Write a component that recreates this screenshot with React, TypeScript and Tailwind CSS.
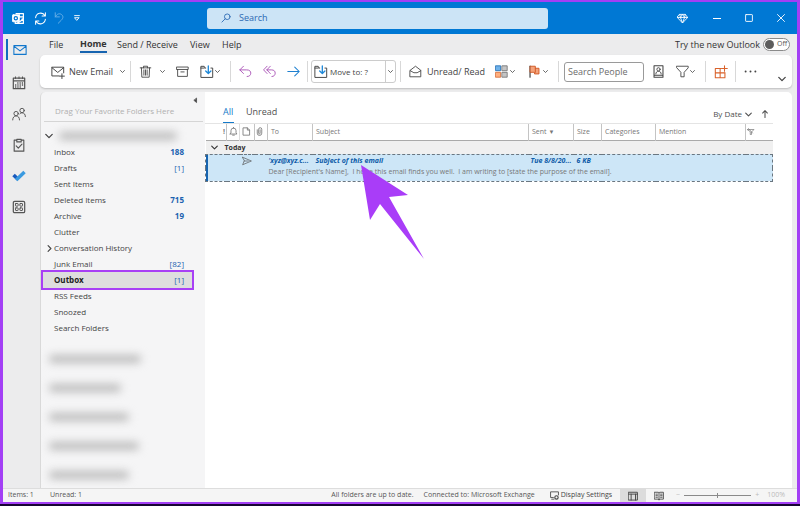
import type { ReactNode } from "react";

type IconProps = { className?: string; box?: string; children: ReactNode };

function Icon({ className = "", box = "0 0 16 16", children }: IconProps) {
  return (
    <svg
      viewBox={box}
      className={`shrink-0 ${className}`}
      fill="none"
      stroke="currentColor"
      strokeWidth="1.1"
      strokeLinejoin="round"
      strokeLinecap="round"
      aria-hidden="true"
    >
      {children}
    </svg>
  );
}

const Chevron = ({ className = "size-[5px]" }: { className?: string }) => (
  <Icon className={className} box="0 0 10 10">
    <path d="M1 3l4 4 4-4" strokeWidth="1.6" />
  </Icon>
);

const FolderDown = () => (
  <Icon className="size-[14px]">
    <path d="M6.500 3.500H5.800L4.800 1.500H1v12.700h13.500V3.500h-2M1 3.500h4" />
    <path d="M9.500 1v8.500M6.500 6.800l3 3 3-3" stroke="#1e88d8" strokeWidth="1.500" />
  </Icon>
);

const Separator = ({ className = "" }: { className?: string }) => (
  <span className={`h-[21px] w-px shrink-0 bg-[#d8d8d8] ${className}`} />
);

const rail = [
  {
    name: "Calendar",
    icon: (
      <Icon className="size-[14px]">
        <path d="M1.500 2.500h13v12h-13zM1.500 5.500h13" strokeWidth="1.400" />
        <path d="M4 1v2M8 1v2M12 1v2" />
        <path d="M6 8h7M3.500 10.300h9.500M3.500 12.500h7" strokeDasharray="1.4 1.2" strokeWidth="1.600" strokeLinecap="butt" />
      </Icon>
    ),
  },
  {
    name: "People",
    icon: (
      <Icon className="size-[14px]">
        <circle cx="4.700" cy="7.500" r="2.500" />
        <path d="M.8 14.800c0-3 1.700-4.600 3.900-4.600s3.900 1.600 3.900 4.600" />
        <circle cx="11.500" cy="4" r="2.500" />
        <path d="M8.800 8c.6-.8 1.500-1.300 2.700-1.300 2.200 0 3.800 1.500 3.800 4.300" />
      </Icon>
    ),
  },
  {
    name: "Tasks",
    icon: (
      <Icon className="size-[14px]">
        <path d="M5.500 2.500h-3v12.500h11v-12.500h-3M5.500 1.500h5v3h-5z" strokeWidth="1.300" />
        <path d="M4.800 9l2.400 2.500 4.200-4.500" strokeWidth="1.300" />
      </Icon>
    ),
  },
  {
    name: "To Do",
    icon: (
      <Icon className="size-[14px]">
        <path d="M1.800 6.800l5 5" stroke="#185abd" strokeWidth="4" strokeLinecap="butt" />
        <path d="M4.800 12.500l9.500-9" stroke="#3a9ae0" strokeWidth="4" strokeLinecap="butt" />
      </Icon>
    ),
  },
  {
    name: "More apps",
    icon: (
      <Icon className="size-[14px]">
        <rect x="1.500" y="1.500" width="13" height="13" rx="1.500" strokeWidth="1.400" />
        <rect x="4" y="4" width="3" height="3" rx=".5" />
        <rect x="9" y="4" width="3" height="3" rx=".5" />
        <rect x="4" y="9" width="3" height="3" rx=".5" />
        <rect x="9" y="9" width="3" height="3" rx=".5" />
      </Icon>
    ),
  },
];

const folders = [
  { name: "Inbox", count: "188", strong: true },
  { name: "Drafts", count: "[1]" },
  { name: "Sent Items" },
  { name: "Deleted Items", count: "715", strong: true },
  { name: "Archive", count: "19", strong: true },
  { name: "Clutter" },
  { name: "Conversation History", expandable: true },
  { name: "Junk Email", count: "[82]" },
  { name: "Outbox", count: "[1]", selected: true },
  { name: "RSS Feeds" },
  { name: "Snoozed" },
  { name: "Search Folders" },
];

function TitleBar() {
  return (
    <header className="flex h-8 shrink-0 items-center bg-[#0078d4] pr-3 pl-[9px] text-white">
      <Icon className="size-[13px]">
        <path d="M5 2h9v6l-2 1M14 8v6H4v-2M6 14l8-5" strokeWidth="1.500" />
        <path d="M9 2v4h5M9 6h5" />
        <rect x="0.500" y="3.500" width="8.500" height="8.500" rx="1" fill="white" />
        <circle cx="4.700" cy="7.700" r="2" stroke="#0078d4" strokeWidth="1.500" />
      </Icon>
      <button aria-label="Sync" className="ml-[9px]">
        <Icon className="size-[13px]">
          <path d="M2 7a6.200 6.200 0 0111.500-2.500M14 9a6.200 6.200 0 01-11.500 2.500M14 1v4h-4M2 15v-4h4" strokeWidth="1.300" />
        </Icon>
      </button>
      <button aria-label="Undo" className="ml-1.5 text-[#65aee6]">
        <Icon className="size-[12px]">
          <path d="M3 1v5.500h5.500M3 6.500C5.500 2 9 1.500 11.500 3.500c3 2.500 1.500 5.500-.5 7.500L7 15" strokeWidth="1.300" />
        </Icon>
      </button>
      <button aria-label="Customize toolbar" className="ml-[9px]">
        <Icon className="size-[6px]" box="0 0 10 10">
          <path d="M1 1h8" strokeWidth="1.500" />
          <path d="M1.500 4.500h7L5 8.500z" strokeWidth="1.500" />
        </Icon>
      </button>
      <label className="ml-[127px] flex h-[21px] w-[341px] items-center gap-2 rounded-[3px] bg-[#cce4f6] px-3.5 text-[#2b69b3]">
        <Icon className="size-[10px]">
          <circle cx="10" cy="6" r="4.500" strokeWidth="1.400" />
          <path d="M6.700 9.300L1.500 14.500" strokeWidth="1.400" />
        </Icon>
        <input aria-label="Search" placeholder="Search" className="w-full bg-transparent text-[9px] outline-none placeholder:text-[#2b69b3]" />
      </label>
      <div className="ml-auto flex items-center">
        <button aria-label="Premium" className="mr-[25px]">
          <Icon className="size-[11px]">
            <path d="M4 2h8l3.500 4.500L8 14.500.5 6.500zM.5 6.500h15M4 2l1 4.500 3 8 3-8L12 2M5 6.500L8 2l3 4.500" strokeWidth="1.300" />
          </Icon>
        </button>
        <button aria-label="Minimize" className="mr-6">
          <Icon className="size-[8px]" box="0 0 8 8"><path d="M0 4.500h8" strokeWidth="1" strokeLinecap="butt" /></Icon>
        </button>
        <button aria-label="Maximize" className="mr-6">
          <Icon className="size-[8px]" box="0 0 8 8"><rect x=".6" y=".6" width="6.800" height="6.800" rx=".5" strokeWidth=".9" /></Icon>
        </button>
        <button aria-label="Close">
          <Icon className="size-[8px]" box="0 0 8 8"><path d="M.5.5l7 7M7.500.5l-7 7" strokeWidth=".9" /></Icon>
        </button>
      </div>
    </header>
  );
}

function MenuBar() {
  return (
    <nav className="flex h-[21px] shrink-0 items-center pr-0.5 pl-[9px] text-[9px]">
      <button className="w-[31px] text-left">File</button>
      <button className="flex w-[37px] flex-col items-start font-bold">
        <span className="border-b-2 border-[#1764b0] leading-[14px]">Home</span>
      </button>
      <button className="w-[73px] text-left">Send / Receive</button>
      <button className="w-8 text-left">View</button>
      <button>Help</button>
      <label className="ml-auto flex items-center gap-[3px]">
        Try the new Outlook
        <span className="flex h-[13px] w-[27px] items-center gap-[3px] rounded-full border border-[#8a8a8a] bg-white pl-px text-[7px] text-[#555]">
          <input type="checkbox" role="switch" className="size-[9px] appearance-none rounded-full bg-[#5c5c5c]" />
          Off
        </span>
      </label>
    </nav>
  );
}

function Ribbon() {
  return (
    <div role="toolbar" className="flex h-[33px] shrink-0 items-center rounded-[5px] bg-white pr-1.5 pl-[11px] text-[9px] text-[#444] shadow-[0_1px_2px_#0003]">
      <button className="flex w-[74px] items-center whitespace-nowrap">
        <Icon className="size-[14px]">
          <path d="M9 12.500H1v-10h13.500V9M1 3l6.700 5.500L14.500 3M12.500 10v5.500M9.700 12.700h5.600" />
        </Icon>
        <span className="ml-1 flex-1 text-left">New Email</span>
        <Chevron />
      </button>
      <Separator className="ml-[5px]" />
      <button aria-label="Delete" className="ml-2">
        <Icon className="size-[13px]">
          <path d="M1.500 3.500h13M5.500 3.500v-2h5v2M3 3.500l.5 11.500h9l.5-11.500M6 6v6.500M8 6v6.500M10 6v6.500" />
        </Icon>
      </button>
      <button aria-label="Delete options" className="ml-2"><Chevron /></button>
      <button aria-label="Archive" className="ml-[11px]">
        <Icon className="size-[13px]">
          <path d="M1 2.500h14v3H1zM2 5.500v8.500h12V5.500M6 8.500h4" />
        </Icon>
      </button>
      <button aria-label="Move" className="ml-[11px] flex items-center gap-px"><FolderDown /><Chevron /></button>
      <Separator className="ml-2.5" />
      <button aria-label="Reply" className="ml-2 text-[#a74fb5]">
        <Icon className="size-[13px]">
          <path d="M5.500 1.500L1 6l4.500 4.500M1 6h8.500c3.500 0 5 1.700 5 4s-1.500 4.200-4.500 4.200" />
        </Icon>
      </button>
      <button aria-label="Reply all" className="ml-[11px] text-[#a74fb5]">
        <Icon className="size-[13px]">
          <path d="M5 1.500L.7 6 5 10.500M9 1.500L4.700 6 9 10.500M4.700 6H10.500c3 0 4.500 1.700 4.500 4s-1.500 4.200-4 4.200" />
        </Icon>
      </button>
      <button aria-label="Forward" className="ml-[11px] text-[#1e80d0]">
        <Icon className="size-[13px]">
          <path d="M1 8h14M9.500 2.500L15 8l-5.500 5.500" strokeWidth="1.300" />
        </Icon>
      </button>
      <Separator className="ml-[7px]" />
      <div className="ml-[3px] flex h-[23px] w-[85px] items-stretch rounded-[3px] border border-[#ccc] text-[8px]">
        <button className="flex flex-1 items-center gap-0.5 pl-0.5"><FolderDown />Move to: ?</button>
        <button aria-label="Move options" className="flex w-2.5 items-center justify-center border-l border-[#ccc]"><Chevron /></button>
      </div>
      <Separator className="ml-1" />
      <button className="ml-2 flex w-[78px] items-center gap-[5px] whitespace-nowrap">
        <Icon className="size-[13px]">
          <path d="M1.500 6.500L8 1.500l6.500 5v8h-13zM1.500 7L6 9.500h4L14.500 7" />
        </Icon>
        Unread/ Read
      </button>
      <button aria-label="Categorize" className="ml-2 flex items-center gap-0.5">
        <Icon className="size-[13px]">
          <rect x="1" y="1" width="6" height="6" fill="#6fb2ea" stroke="#2472b8" />
          <rect x="9" y="1" width="6" height="6" fill="#c4c4c4" stroke="#777" />
          <rect x="1" y="9" width="6" height="6" fill="#ffb080" stroke="#d96f3a" />
          <rect x="9" y="9" width="6" height="6" fill="#c4c4c4" stroke="#777" />
        </Icon>
        <Chevron />
      </button>
      <button aria-label="Follow up" className="ml-[13px] flex items-center gap-0.5">
        <Icon className="size-[13px]">
          <path d="M2.500 1.500v13.500" strokeWidth="1.500" />
          <path d="M3 1.500h6v2.500h4.500v7H8v-2H3z" fill="#f5a27a" stroke="#cf5420" />
          <path d="M9 4v5" stroke="#cf5420" />
        </Icon>
        <Chevron />
      </button>
      <Separator className="ml-2.5" />
      <input aria-label="Search People" placeholder="Search People" className="ml-[5px] h-5 w-20 rounded-[3px] border border-[#9a9a9a] px-[3px] text-[9px] outline-none placeholder:text-[#6b6b6b]" />
      <button aria-label="Address book" className="ml-2">
        <Icon className="size-[13px]">
          <path d="M2.500 1h11v14h-11zM2.500 12.500h11" strokeWidth="1.300" />
          <circle cx="8" cy="5.300" r="2" />
          <path d="M4.700 11c0-2 1.300-3.200 3.300-3.200s3.300 1.200 3.300 3.200" />
        </Icon>
      </button>
      <button aria-label="Filter email" className="ml-[11px] flex items-center gap-px">
        <Icon className="size-[13px]">
          <path d="M1 1.500h14v2L10 9v5.500H6V9L1 3.500z" />
        </Icon>
        <Chevron />
      </button>
      <Separator className="ml-2.5" />
      <button aria-label="Get add-ins" className="ml-2 text-[#d9622b]">
        <Icon className="size-[14px]">
          <path d="M8 4H1.500v10.500H12.500V8.500M1.500 9h11M7 4v10.500M12 .8v6.400M8.800 4h6.400" strokeWidth="1.200" />
        </Icon>
      </button>
      <Separator className="ml-[7px]" />
      <button aria-label="More commands" className="ml-2">
        <Icon className="size-[13px]">
          <path d="M2 8h.01M8 8h.01M14 8h.01" strokeWidth="2.400" />
        </Icon>
      </button>
      <button aria-label="Collapse ribbon" className="mt-3.5 ml-auto"><Chevron className="size-[8px]" /></button>
    </div>
  );
}

const Redacted = ({ className }: { className: string }) => (
  <span className={`block rounded-full bg-[#bcbcbc] blur-[4px] ${className}`} />
);

function FolderPane() {
  return (
    <aside className="flex w-[165px] shrink-0 flex-col overflow-hidden rounded-tl-[5px] border-l border-[#d9d9d9] bg-[#f5f5f6] text-[8px] text-[#444]">
      <div className="mr-0.5 ml-[3px] flex h-[30px] shrink-0 flex-col border-b border-[#d5d5d5]">
        <button aria-label="Collapse folder pane" className="mt-[5px] mr-1 self-end">
          <Icon className="size-[7px]" box="0 0 10 10"><path d="M6.500 2v6L3 5z" fill="currentColor" strokeWidth="1" /></Icon>
        </button>
        <p className="pl-[11px] leading-[14px] text-[#b0b0b0]">Drag Your Favorite Folders Here</p>
      </div>
      <div className="flex h-[22px] shrink-0 items-center pt-1.5 pl-1">
        <Chevron className="size-[8px]" />
        <Redacted className="ml-1.5 h-2 w-[118px]" />
      </div>
      <ul className="shrink-0">
        {folders.map((f) => (
          <li key={f.name}>
            <button
              className={`relative flex w-[153px] items-center justify-between pr-2.5 pl-[13px] text-left ${
                f.selected ? "-my-0.5 h-5 bg-[#dedede] font-bold text-[#1c1c1c] outline-2 -outline-offset-2 outline-[#a840f5]" : "h-4"
              }`}
            >
              {f.expandable && (
                <Icon className="absolute left-[5px] size-[7px]" box="0 0 10 10"><path d="M3 1l4 4-4 4" strokeWidth="1.600" /></Icon>
              )}
              {f.name}
              {f.count && <span className={`text-[#1b62b0] ${f.strong ? "font-bold" : "font-normal"}`}>{f.count}</span>}
            </button>
          </li>
        ))}
      </ul>
      <div className="mt-[19px] flex flex-col gap-[21px] pl-2">
        <Redacted className="h-2 w-[92px]" />
        <Redacted className="h-2 w-[72px]" />
        <Redacted className="h-2 w-20" />
        <Redacted className="h-2 w-[90px]" />
        <Redacted className="h-2 w-20" />
      </div>
    </aside>
  );
}

const headCell = "border-l border-[#c4c4c4] pl-[3px] text-left font-normal";

function MessageList() {
  return (
    <main className="min-w-0 flex-1 rounded-tr-[5px] bg-white pr-[19px]">
      <div className="flex h-8 items-end border-b border-[#e4e4e4] pl-[18px] text-[9px] text-[#505050]">
        <button className="w-[23px] text-left text-[#1479c9]">
          <span className="block w-[11px] border-b border-[#1479c9] leading-[20px]">All</span>
        </button>
        <button className="pb-px leading-[20px]">Unread</button>
        <button className="mr-[9px] ml-auto flex items-center gap-[3px] text-[8px] leading-[18px]">
          By Date <Chevron className="size-[7px]" />
        </button>
        <button aria-label="Reverse sort order" className="mr-1 pb-[5px]">
          <Icon className="size-[8px]" box="0 0 10 10"><path d="M5 9.500V.8M2 3.800l3-3 3 3" strokeWidth="1.300" /></Icon>
        </button>
      </div>
      <table className="w-full table-fixed border-collapse text-[7px] whitespace-nowrap text-[#777]">
        <colgroup>
          <col className="w-[21px]" />
          <col className="w-[13px]" />
          <col className="w-[15px]" />
          <col className="w-[13px]" />
          <col className="w-[45px]" />
          <col />
          <col className="w-[45px]" />
          <col className="w-[28px]" />
          <col className="w-[54px]" />
          <col className="w-[90px]" />
          <col className="w-[27px]" />
        </colgroup>
        <thead>
          <tr className="h-4">
            <th aria-label="Importance" className="pr-px text-right font-bold">!</th>
            <th aria-label="Reminder" className="border-l border-[#c4c4c4] pl-0.5">
              <Icon className="size-[9px]"><path d="M2 12.500h12L12.500 10V6.500a4.500 4.500 0 00-9 0V10zM6.500 14.500h3M8 2V.5" strokeWidth="1.500" /></Icon>
            </th>
            <th aria-label="Icon" className="border-l border-[#ddd] pl-0.5">
              <Icon className="size-[9px]"><path d="M2.500 1.500h7l4 4v9h-11zM9.500 1.500v4h4" strokeWidth="1.500" /></Icon>
            </th>
            <th aria-label="Attachment" className="border-l border-[#c4c4c4]">
              <Icon className="size-[9px]"><path d="M4 5v6a4 4 0 008 0V4a2.700 2.700 0 00-5.500 0v7a1.300 1.300 0 002.600 0V5" strokeWidth="1.500" /></Icon>
            </th>
            <th className={headCell}>To</th>
            <th className={headCell}>Subject</th>
            <th className={headCell}>Sent <span className="text-[6px]">▼</span></th>
            <th className={headCell}>Size</th>
            <th className={headCell}>Categories</th>
            <th className={headCell}>Mention</th>
            <th aria-label="Filter" className="border-l border-[#c4c4c4] pl-px">
              <Icon className="size-[8px]"><path d="M1 3h13L9 8v5H6.500V8zM3 1l8 9" strokeWidth="1.400" /></Icon>
            </th>
          </tr>
        </thead>
        <tbody>
          <tr className="h-[14px] border-t border-[#aaa] bg-[#f0f0f0] text-[#333]">
            <th colSpan={11} className="text-left">
              <span className="flex items-center gap-[7px] pl-[5px] leading-[13px]">
                <Chevron className="size-[7px]" />
                Today
              </span>
            </th>
          </tr>
        </tbody>
        <tbody className="border border-dashed border-[#6a7680] bg-[#cde6f7]">
          <tr className="h-[14px] font-bold text-[#0e5ba8] italic">
            <td colSpan={2} rowSpan={2} className="shadow-[inset_2px_0_#1764b0]" />
            <td colSpan={2} className="text-[#555]">
              <Icon className="ml-0.5 size-[10px]"><path d="M1 2l14 6-14 6 2.500-6zM3.500 8H10" /></Icon>
            </td>
            <td className="pl-px">'xyz@xyz.c...</td>
            <td className="pl-[3px]">Subject of this email</td>
            <td className="pl-0.5">Tue 8/8/20...</td>
            <td className="pl-[3px]">6 KB</td>
            <td colSpan={3} />
          </tr>
          <tr className="h-[13px] align-top">
            <td colSpan={2} />
            <td colSpan={7} className="pl-px leading-[8px] whitespace-pre">
              {"Dear [Recipient's Name],  I hope this email finds you well.  I am writing to [state the purpose of the email]."}
            </td>
          </tr>
        </tbody>
      </table>
    </main>
  );
}

function StatusBar() {
  return (
    <footer className="flex h-[14px] shrink-0 items-center border-t border-[#ddd] bg-[#f5f5f5] pr-3 pl-[5px] text-[7px] text-[#555]">
      <span className="w-[42px]">Items: 1</span>
      <span>Unread: 1</span>
      <span className="mr-2.5 ml-auto">All folders are up to date.</span>
      <span className="mr-[15px]">Connected to: Microsoft Exchange</span>
      <button className="mr-2 flex items-center gap-0.5 text-[#444]">
        <Icon className="size-[9px]">
          <path d="M6 11.500H1v-10h14V7M3 14.500h4" strokeWidth="1.500" />
          <circle cx="11.500" cy="11.500" r="3" strokeWidth="2" />
        </Icon>
        Display Settings
      </button>
      <button aria-label="Normal view" className="flex h-[13px] w-[26px] items-center justify-center bg-[#dcdcdc] text-[#444]">
        <Icon className="size-[10px]"><path d="M1 2h14v12.500H1zM1 5h14M5 5v9.500M12 5v9.500" strokeWidth="1.500" /></Icon>
      </button>
      <button aria-label="Reading view" className="mr-3 ml-2 text-[#444]">
        <Icon className="size-[10px]"><path d="M1 2h6l1 1 1-1h6v11H9l-1 1.500L7 13H1zM8 3v11M3 5h2.500M3 7.500h2.500M3 10h2.500M10.500 5H13M10.500 7.500H13M10.500 10H13" strokeWidth="1.400" /></Icon>
      </button>
      <span className="flex items-center gap-1 text-[#bbb]">
        <button aria-label="Zoom out">−</button>
        <input
          type="range"
          aria-label="Zoom"
          className="h-[5px] w-[67px] appearance-none bg-[linear-gradient(#8a8a8a,#8a8a8a)] bg-[length:100%_1px] bg-center bg-no-repeat [&::-webkit-slider-thumb]:h-[5px] [&::-webkit-slider-thumb]:w-px [&::-webkit-slider-thumb]:appearance-none [&::-webkit-slider-thumb]:bg-[#8a8a8a]"
        />
        <button aria-label="Zoom in">+</button>
        <output className="ml-1">100%</output>
      </span>
    </footer>
  );
}

export default function App() {
  return (
    <div className="relative h-screen border-b-2 border-[#170433] bg-[#12123a] font-['Open_Sans','Noto_Sans',sans-serif] text-[#333]">
      <div className="flex h-full flex-col overflow-hidden border-t-2 border-r-[3px] border-b-2 border-l-[3px] border-[#a33ff5] bg-[#ececed]">
        <TitleBar />
        <div className="flex min-h-0 flex-1">
          <nav aria-label="Apps" className="flex w-[37px] shrink-0 flex-col items-center gap-[17px] pt-[5px] pr-2 pl-[3px] text-[#555]">
            <button aria-label="Mail" className="-mb-px flex h-[21px] w-full items-center justify-center border-l-2 border-[#0f6cbd] text-[#1177cc]">
              <Icon className="size-[14px]"><path d="M1 3h14v10H1zM1 3.500l7 5.500 7-5.500" strokeWidth="1.200" /></Icon>
            </button>
            {rail.map((item) => (
              <button key={item.name} aria-label={item.name}>{item.icon}</button>
            ))}
          </nav>
          <div className="flex min-w-0 flex-1 flex-col pr-[5px]">
            <MenuBar />
            <Ribbon />
            <div className="mt-1 flex min-h-0 flex-1">
              <FolderPane />
              <MessageList />
            </div>
          </div>
        </div>
        <StatusBar />
      </div>
      <svg viewBox="0 0 64 95" className="absolute top-[165px] left-[361px] w-16" fill="#a93df8" aria-hidden="true">
        <path d="M0 0l47 30-19 2 35 62-44-55-10 16z" />
      </svg>
    </div>
  );
}
